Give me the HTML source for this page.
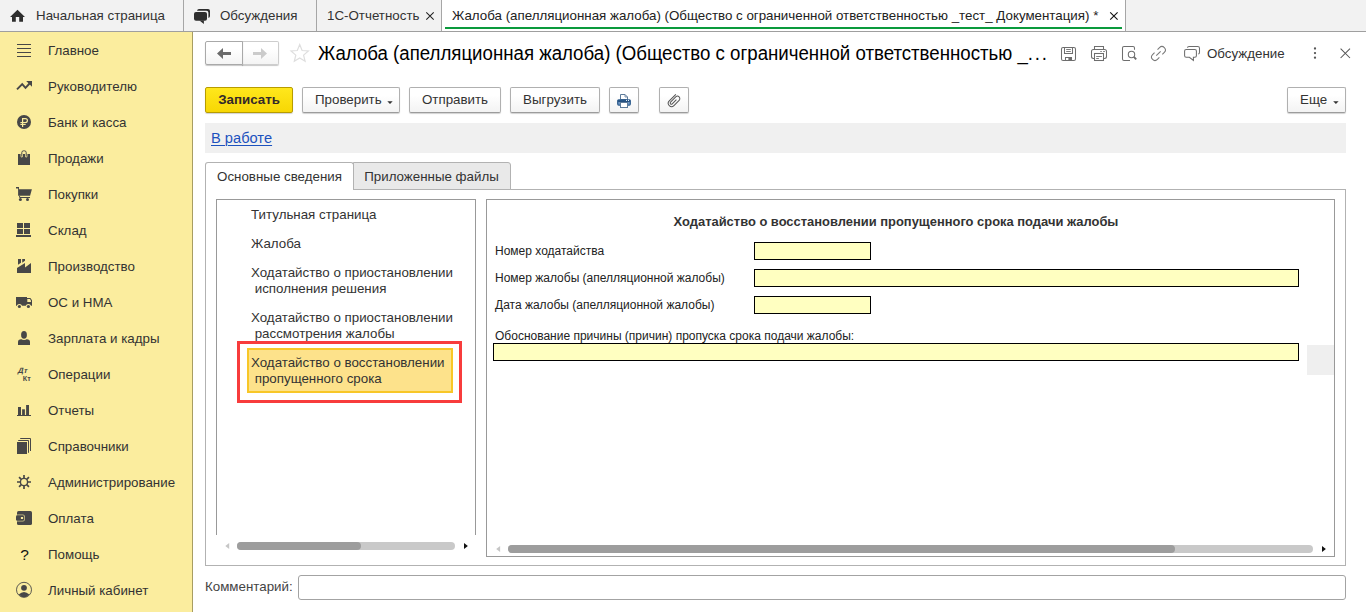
<!DOCTYPE html>
<html lang="ru">
<head>
<meta charset="utf-8">
<title>Жалоба (апелляционная жалоба)</title>
<style>
*{box-sizing:border-box;margin:0;padding:0}
html,body{width:1366px;height:612px;overflow:hidden;background:#fff}
body{font-family:"Liberation Sans",Arial,sans-serif;font-size:14px;color:#333;position:relative}
.abs{position:absolute}
/* top tab bar */
#tabs{position:absolute;left:0;top:0;width:1366px;height:32px;background:#f2f2f2;border-bottom:1px solid #9f9f9f}
#tabs .t{position:absolute;top:0;height:31px;line-height:31px;font-size:13.33px;color:#333;white-space:nowrap}
#tabs .sep{position:absolute;top:0;width:1px;height:31px;background:#a6a6a6}
#tabs .act{position:absolute;left:442px;top:0;width:683px;height:31px;background:#fff}
#tabs .ul{position:absolute;left:445px;top:27px;width:677px;height:2px;background:#0a9a3c}
/* sidebar */
#side{position:absolute;left:0;top:32px;width:193px;height:580px;background:#fbed9e;border-right:1px solid #a89d62}
#side .i{position:absolute;left:48px;height:20px;line-height:20px;font-size:13.33px;color:#333;white-space:nowrap}
#side svg{position:absolute}
/* buttons */
.btn{position:absolute;top:87px;height:26px;line-height:24px;border:1px solid #b0b0b0;border-bottom-color:#9c9c9c;border-radius:2px;background:linear-gradient(#fff 30%,#f3f3f3);font-size:13.33px;color:#333;text-align:center;white-space:nowrap;box-shadow:0 1px 1px rgba(0,0,0,.18)}
.btn.y{background:linear-gradient(#ffe71c,#f7d704);border-color:#b79c00;font-weight:bold;color:#33292a}
.car{display:inline-block;width:0;height:0;border-left:4px solid transparent;border-right:4px solid transparent;border-top:4px solid #333;vertical-align:middle;margin-left:6px;margin-top:2px}
.nb{position:absolute;top:41px;height:24px;border:1px solid #a9a9a9;border-radius:2px;background:linear-gradient(#fff 30%,#f4f4f4);box-shadow:0 1px 1px rgba(0,0,0,.22)}
.tr{position:absolute;left:251px;font-size:13.33px;line-height:16px;color:#333;white-space:nowrap}
.fl{position:absolute;left:495px;font-size:12px;line-height:14px;color:#222;white-space:nowrap}
.fd{position:absolute;height:18px;background:#ffffc1;border:1px solid #000}
</style>
</head>
<body>
<div id="tabs">
  <div class="act"></div>
  <svg class="abs" style="left:0;top:0" width="1366" height="31" viewBox="0 0 1366 31">
    <path d="M17.5 9.8 L25 16.9 H23 V21.8 H19.2 V16.9 H15.8 V21.8 H12 V16.9 H10 Z" fill="#2e2e2e"/>
    <path d="M197 10.7 Q197.3 9 199 9 H208 Q210 9 210 11 V16 Q210 17.7 208.4 18 V12.7 Q208.4 10.7 206.4 10.7 Z" fill="#2e2e2e"/>
    <rect x="194" y="12" width="13" height="8.7" rx="2" fill="#2e2e2e"/>
    <path d="M199.4 20.4 H203.9 V23.9 Z" fill="#2e2e2e"/>
    <path d="M426.3 12.3 L433.7 19.7 M433.7 12.3 L426.3 19.7" stroke="#222" stroke-width="1.05" fill="none"/>
    <path d="M1110.2 12.3 L1117.6 19.7 M1117.6 12.3 L1110.2 19.7" stroke="#111" stroke-width="1.1" fill="none"/>
  </svg>
  <div class="t" style="left:36px">Начальная страница</div>
  <div class="sep" style="left:183px"></div>
  <div class="t" style="left:220px">Обсуждения</div>
  <div class="sep" style="left:316px"></div>
  <div class="t" style="left:327px">1С-Отчетность</div>
  <div class="sep" style="left:441px"></div>
  <div class="t" style="left:452px;color:#222">Жалоба (апелляционная жалоба) (Общество с ограниченной ответственностью _тест_ Документация) *</div>
  <div class="ul"></div>
  <div class="sep" style="left:1125px"></div>
</div>

<div id="side">
  <div class="i" style="top:9px">Главное</div>
  <div class="i" style="top:45px">Руководителю</div>
  <div class="i" style="top:81px">Банк и касса</div>
  <div class="i" style="top:117px">Продажи</div>
  <div class="i" style="top:153px">Покупки</div>
  <div class="i" style="top:189px">Склад</div>
  <div class="i" style="top:225px">Производство</div>
  <div class="i" style="top:261px">ОС и НМА</div>
  <div class="i" style="top:297px">Зарплата и кадры</div>
  <div class="i" style="top:333px">Операции</div>
  <div class="i" style="top:369px">Отчеты</div>
  <div class="i" style="top:405px">Справочники</div>
  <div class="i" style="top:441px">Администрирование</div>
  <div class="i" style="top:477px">Оплата</div>
  <div class="i" style="top:513px">Помощь</div>
  <div class="i" style="top:549px">Личный кабинет</div>
</div>

<svg class="abs" style="left:0;top:0" width="48" height="612" viewBox="0 0 48 612">
<g fill="#474747">
<!-- glavnoe -->
<rect x="17" y="44" width="14" height="1"/><rect x="17" y="48" width="14" height="1"/><rect x="17" y="52" width="14" height="1"/><rect x="17" y="56" width="14" height="1"/>
<!-- rukovoditelyu -->
<path d="M17 89.3 L22.2 84.1 L25.5 87.8 L30 83" fill="none" stroke="#474747" stroke-width="1.9" stroke-linejoin="miter"/>
<path d="M26.2 81 H32 V86.8 Z"/>
<!-- bank -->
<circle cx="24" cy="122" r="7"/>
<g fill="none" stroke="#fbed9e" stroke-width="1.2"><path d="M22.6 126.9 V118.6 H25.4 Q27.4 118.6 27.4 120.55 Q27.4 122.5 25.4 122.5 H20.4"/><path d="M20.4 124.4 H25.7"/></g>
<!-- prodazhi -->
<rect x="18" y="154" width="12" height="11"/>
<path d="M20.6 154 H23 V156.3 Q23 157.4 21.8 157.4 Q20.6 157.4 20.6 156.3Z M25 154 H27.4 V156.3 Q27.4 157.4 26.2 157.4 Q25 157.4 25 156.3Z" fill="#fbed9e"/>
<path d="M21.8 156.6 V152.6 Q21.8 150.8 23.6 150.8 H24.4 Q26.2 150.8 26.2 152.6 V156.6" fill="none" stroke="#474747" stroke-width="1"/>
<!-- pokupki -->
<path d="M16 187 H19 V189.2 H31.9 L30.1 195.8 H18.1 V188.6 H16 Z"/>
<path d="M19.6 195.8 V197.5 H30" fill="none" stroke="#474747" stroke-width="1"/>
<circle cx="20.4" cy="199.6" r="1.5"/><circle cx="27.5" cy="199.6" r="1.5"/>
<!-- sklad -->
<rect x="17" y="223" width="6" height="5"/><rect x="24" y="223" width="6" height="5"/><rect x="17" y="229" width="6" height="5"/><rect x="24" y="229" width="6" height="5"/><rect x="16" y="235" width="15" height="2"/>
<!-- proizvodstvo -->
<path d="M17 273 V267.9 L25 263 V267.4 L31 263 V273 Z"/>
<path d="M18 259 H21 V262.8 L18 264.7 Z M22.2 259 H25 V260.7 L22.2 262.7 Z"/>
<!-- os i nma -->
<path d="M16 297 H27 V298 H30.4 L32 300.2 V305.8 H16 Z"/>
<circle cx="19.4" cy="306.5" r="2.6" fill="#fbed9e"/><circle cx="28.4" cy="306.5" r="2.6" fill="#fbed9e"/>
<circle cx="19.4" cy="306.5" r="1.6"/><circle cx="28.4" cy="306.5" r="1.6"/>
<path d="M27.3 298.9 H29.9 L30.9 300.4 V302 H27.3Z" fill="#fbed9e"/>
<!-- zarplata -->
<path d="M18 345 V342 Q18 339.2 21.2 339.2 H26.8 Q30 339.2 30 342 V345 Z"/>
<ellipse cx="24" cy="335.2" rx="3.9" ry="4.9" fill="#fbed9e"/>
<ellipse cx="24" cy="334.9" rx="2.9" ry="3.8"/>
<!-- otchety -->
<rect x="18" y="407" width="3" height="8.5"/><rect x="22.1" y="409.3" width="2.8" height="6"/><rect x="26.1" y="405" width="2.9" height="10.5"/><rect x="17" y="415" width="14" height="1"/>
<!-- spravochniki -->
<rect x="17" y="442" width="10" height="12"/>
<path d="M18.2 440.5 H28.5 V452.8" fill="none" stroke="#474747" stroke-width="1"/>
<path d="M20.2 438.5 H30.5 V451" fill="none" stroke="#474747" stroke-width="1"/>
<!-- admin -->
<circle cx="24" cy="482" r="3.6" fill="none" stroke="#474747" stroke-width="1.4"/>
<g stroke="#474747" stroke-width="1.7"><path d="M24 475 V478.2 M24 485.8 V489 M17 482 H20.2 M27.8 482 H31 M19.05 477.05 L21.3 479.3 M26.7 484.7 L28.95 486.95 M19.05 486.95 L21.3 484.7 M26.7 479.3 L28.95 477.05"/></g>
<!-- oplata -->
<rect x="17" y="511" width="15" height="14" rx="1.6"/>
<rect x="15.5" y="514.4" width="9.3" height="7.2" rx="1.8" fill="#fbed9e" opacity="0.75"/>
<rect x="16" y="515.2" width="8" height="5.6" rx="1.3"/>
<rect x="20.9" y="517" width="2.2" height="2" fill="#fbed9e"/>
<!-- lichnyi kabinet -->
<circle cx="24" cy="589.8" r="7.5" fill="none" stroke="#474747" stroke-width="0.9"/>
<circle cx="24" cy="587.8" r="2.9"/>
<path d="M18.7 594.6 Q24 589.6 29.3 594.6 Q27 597.3 24 597.3 Q21 597.3 18.7 594.6Z"/>
</g>
<text transform="translate(17.4,372.5) skewX(-14)" font-family="Liberation Sans, sans-serif" font-size="7.8" letter-spacing="0.3" font-weight="bold" fill="#474747">Дт</text>
<text x="22.8" y="380.8" font-family="Liberation Sans, sans-serif" font-size="7.2" font-weight="bold" fill="#474747">Кт</text>
<text x="20.2" y="560" font-family="Liberation Sans, sans-serif" font-size="15.5" fill="#111">?</text>
</svg>
<div id="main">
  <!-- nav buttons -->
  <div class="nb" style="left:242px;width:37px;border-radius:0 2px 2px 0;border-color:#cdcdcd;border-left:none"></div>
  <div class="nb" style="left:205px;width:38px;border-radius:2px 0 0 2px"></div>
  <svg class="abs" style="left:205px;top:41px" width="74" height="24" viewBox="205 41 74 24"><path d="M217 53.5 L223 48 V52 H231 V55 H223 V59 Z" fill="#6b6b6b"/><path d="M267 53.5 L261 48 V52 H253 V55 H261 V59 Z" fill="#cbcbcb"/></svg>
  <svg class="abs" style="left:289px;top:42px" width="22" height="22" viewBox="0 0 22 22"><path d="M10.7 2.6 L13.1 8.5 L19.4 9 L14.6 13.1 L16.1 19.3 L10.7 16 L5.3 19.3 L6.8 13.1 L2 9 L8.3 8.5 Z" fill="none" stroke="#dedede" stroke-width="1.2" stroke-linejoin="miter"/></svg>
  <div class="abs" id="title" style="left:318px;top:40px;height:26px;line-height:26px;font-size:18.67px;color:#000;white-space:nowrap;transform-origin:0 6px;transform:scaleY(1.05)">Жалоба (апелляционная жалоба) (Общество с ограниченной ответственностью _<span style="letter-spacing:1.8px">...</span></div>

  <!-- header icons -->
  <svg class="abs" style="left:1050px;top:40px" width="316" height="28" viewBox="1050 40 316 28" fill="none" stroke="#6e6e6e" stroke-width="1.05">
    <!-- save -->
    <rect x="1061.5" y="47.5" width="14" height="13" rx="1.6"/>
    <path d="M1064.5 47.5 V53.5 H1072.5 V47.5"/>
    <path d="M1066.2 49.5 H1070.8 M1066.2 51.5 H1070.8" stroke-width="0.9"/>
    <path d="M1065.5 60.5 V57.5 H1071.5 V60.5"/>
    <rect x="1068.4" y="57.5" width="3.1" height="3" fill="#6e6e6e" stroke="none"/>
    <!-- print -->
    <path d="M1094.5 49.5 V46.5 H1103.5 V49.5"/>
    <path d="M1094.5 58.5 H1093.5 Q1091.5 58.5 1091.5 56.5 V51.5 Q1091.5 49.5 1093.5 49.5 H1104.5 Q1106.5 49.5 1106.5 51.5 V56.5 Q1106.5 58.5 1104.5 58.5 H1103.5"/>
    <rect x="1094.5" y="53.5" width="9" height="7"/>
    <path d="M1096.2 56.5 H1101.9 M1096.2 58.5 H1098.9 M1100.3 51.5 H1101.8 M1103.2 51.5 H1104.9" stroke-width="0.9"/>
    <!-- preview -->
    <path d="M1134.5 49.8 V48 Q1134.5 46.5 1133 46.5 H1124 Q1122.5 46.5 1122.5 48 V58.9 Q1122.5 60.4 1124 60.4 H1130"/>
    <circle cx="1131.5" cy="54.5" r="3.2"/>
    <path d="M1133.9 56.9 L1136.2 59.4" stroke-width="1.9"/>
    <!-- link -->
    <g transform="translate(1158.45 53.5) rotate(-45)" stroke="#787878"><path d="M2.1 -3.4 H4.9 A3.4 3.4 0 0 1 4.9 3.4 H2.1"/><path d="M-2.1 -3.4 H-4.9 A3.4 3.4 0 0 0 -4.9 3.4 H-2.1"/><path d="M-3.1 0 H3.1"/></g>
    <!-- chat -->
    <path d="M1187.5 47.8 Q1187.5 46.5 1189 46.5 H1197.7 Q1199.5 46.5 1199.5 48.3 V52.3 Q1199.5 54 1198.2 54.1"/>
    <path d="M1186.2 49.5 H1194.8 Q1196.4 49.5 1196.4 51.1 V55.7 Q1196.4 57.3 1194.8 57.3 H1193.4 V60.4 L1189.4 57.3 H1186.2 Q1184.6 57.3 1184.6 55.7 V51.1 Q1184.6 49.5 1186.2 49.5 Z"/>
    <!-- more -->
    <g fill="#555" stroke="none"><circle cx="1315" cy="48.5" r="1.15"/><circle cx="1315" cy="53.1" r="1.15"/><circle cx="1315" cy="57.7" r="1.15"/></g>
    <!-- close -->
    <path d="M1340.6 48.6 L1350 58 M1350 48.6 L1340.6 58" stroke="#555" stroke-width="1.05"/>
  </svg>
  <div class="abs" style="left:1207px;top:44px;height:20px;line-height:20px;font-size:13.33px;color:#333;white-space:nowrap">Обсуждение</div>

  <!-- toolbar -->
  <div class="btn y" style="left:205px;width:88px">Записать</div>
  <div class="btn" style="left:302px;width:98px;text-align:left;padding-left:12px">Проверить</div>
  <div class="btn" style="left:409px;width:92px">Отправить</div>
  <div class="btn" style="left:510px;width:90px">Выгрузить</div>
  <div class="btn" style="left:609px;width:30px"></div>
  <div class="btn" style="left:659px;width:30px"></div>
  <div class="btn" style="left:1287px;width:59px;text-align:left;padding-left:12px">Еще</div>
  <svg class="abs" style="left:300px;top:87px" width="1050" height="26" viewBox="300 87 1050 26">
    <path d="M387.3 101.2 H392.7 L390 104 Z" fill="#333"/>
    <path d="M1333.2 101.2 H1338.6 L1335.9 104 Z" fill="#333"/>
    <!-- printer -->
    <path d="M620.5 99.5 V94.5 H625 L627.5 97 V99.5 Z" fill="#fff" stroke="#5d7a99" stroke-width="1"/>
    <path d="M625 94.5 V97 H627.5" fill="none" stroke="#5d7a99" stroke-width="0.8"/>
    <rect x="617.1" y="99.2" width="13.8" height="6.5" rx="1.6" fill="#275789"/>
    <rect x="618.3" y="101.6" width="11.4" height="3" fill="#6f96c3"/>
    <rect x="618.3" y="100.9" width="11.4" height="0.9" fill="#1d4878"/>
    <rect x="626" y="99.9" width="1" height="1" fill="#fff"/><rect x="628" y="99.9" width="1" height="1" fill="#fff"/>
    <rect x="620.5" y="102.5" width="7" height="5" fill="#fff" stroke="#5d7a99" stroke-width="1"/>
    <!-- clip -->
    <g transform="translate(671.6 103.2) rotate(-45)" fill="none" stroke="#555" stroke-width="1"><path d="M9.3 -3.3 L0 -3.3 A3.3 3.3 0 0 0 0 3.3 L7.35 3.3 A2.4 2.4 0 0 0 7.35 -1.5 L0 -1.5 A1.2 1.2 0 0 0 0 0.9 L5.9 0.9"/></g>
  </svg>

  <!-- status -->
  <div class="abs" style="left:205px;top:123px;width:1141px;height:30px;background:#f0f0f0"></div>
  <div class="abs" style="left:211px;top:127px;height:22px;line-height:22px;font-size:14.67px;color:#1c52be;text-decoration:underline;text-decoration-thickness:1px;text-underline-offset:1.6px;white-space:nowrap">В работе</div>

  <!-- tabs -->
  <div class="abs" style="left:205px;top:189px;width:1141px;height:377px;border:1px solid #b2b2b2"></div>
  <div class="abs" style="left:353px;top:162px;width:158px;height:28px;background:#e9e9e9;border:1px solid #b2b2b2;border-radius:0 3px 0 0;line-height:27px;text-align:center;padding-right:1px;font-size:13.33px;color:#333">Приложенные файлы</div>
  <div class="abs" style="left:205px;top:162px;width:149px;height:28px;background:#fff;border:1px solid #b2b2b2;border-bottom:none;border-radius:3px 3px 0 0;line-height:27px;text-align:center;font-size:13.33px;color:#333">Основные сведения</div>

  <!-- left tree -->
  <div class="abs" style="left:216px;top:199px;width:260px;height:336px;border:1px solid #999;border-bottom:none"></div>
  <div class="tr" style="top:207px">Титульная страница</div>
  <div class="tr" style="top:236px">Жалоба</div>
  <div class="tr" style="top:265px">Ходатайство о приостановлении<br>&nbsp;исполнения решения</div>
  <div class="tr" style="top:310px">Ходатайство о приостановлении<br>&nbsp;рассмотрения жалобы</div>
  <div class="abs" style="left:237px;top:341px;width:225px;height:62px;border:3px solid #f83c3c"></div>
  <div class="abs" style="left:247px;top:348px;width:206px;height:45px;background:#fde28b;border:2px solid #f8c728"></div>
  <div class="tr" style="top:355px">Ходатайство о восстановлении<br>&nbsp;пропущенного срока</div>
  <!-- left scrollbar -->
  <div class="abs" style="left:237px;top:542px;width:218px;height:8px;border-radius:4px;background:#c9c9c9"></div>
  <div class="abs" style="left:237px;top:542px;width:124px;height:8px;border-radius:4px;background:#9d9d9d"></div>
  <svg class="abs" style="left:220px;top:538px" width="1110" height="18" viewBox="220 538 1110 18">
    <path d="M229.2 543 V549 L225.3 546 Z" fill="#c6c6c6"/>
    <path d="M464 543 V549 L467.9 546 Z" fill="#111"/>
    <path d="M500.1 546 V552 L496.2 549 Z" fill="#c6c6c6"/>
    <path d="M1322 546 V552 L1325.9 549 Z" fill="#111"/>
  </svg>

  <!-- right panel -->
  <div class="abs" style="left:486px;top:199px;width:849px;height:358px;border:1px solid #999"></div>
  <div class="abs" style="left:673px;top:214px;width:446px;height:16px;line-height:16px;font-size:12.93px;font-weight:bold;color:#333;white-space:nowrap;text-align:center">Ходатайство о восстановлении пропущенного срока подачи жалобы</div>
  <div class="fl" style="top:244px">Номер ходатайства</div>
  <div class="fl" style="top:271px">Номер жалобы (апелляционной жалобы)</div>
  <div class="fl" style="top:298px">Дата жалобы (апелляционной жалобы)</div>
  <div class="fl" style="top:329px">Обоснование причины (причин) пропуска срока подачи жалобы:</div>
  <div class="fd" style="left:754px;top:242px;width:117px"></div>
  <div class="fd" style="left:754px;top:269px;width:545px"></div>
  <div class="fd" style="left:754px;top:296px;width:117px"></div>
  <div class="fd" style="left:493px;top:343px;width:806px"></div>
  <div class="abs" style="left:1307px;top:345px;width:27px;height:30px;background:#efefef"></div>
  <!-- right scrollbar -->
  <div class="abs" style="left:508px;top:545px;width:805px;height:8px;border-radius:4px;background:#c9c9c9"></div>
  <div class="abs" style="left:508px;top:545px;width:667px;height:8px;border-radius:4px;background:#9d9d9d"></div>

  <!-- comment -->
  <div class="abs" style="left:205px;top:577px;height:20px;line-height:20px;font-size:13.33px;color:#444;white-space:nowrap">Комментарий:</div>
  <div class="abs" style="left:298px;top:575px;width:1048px;height:25px;border:1px solid #a3a3a3;border-radius:3px;background:#fff"></div>
</div>
</body>
</html>
